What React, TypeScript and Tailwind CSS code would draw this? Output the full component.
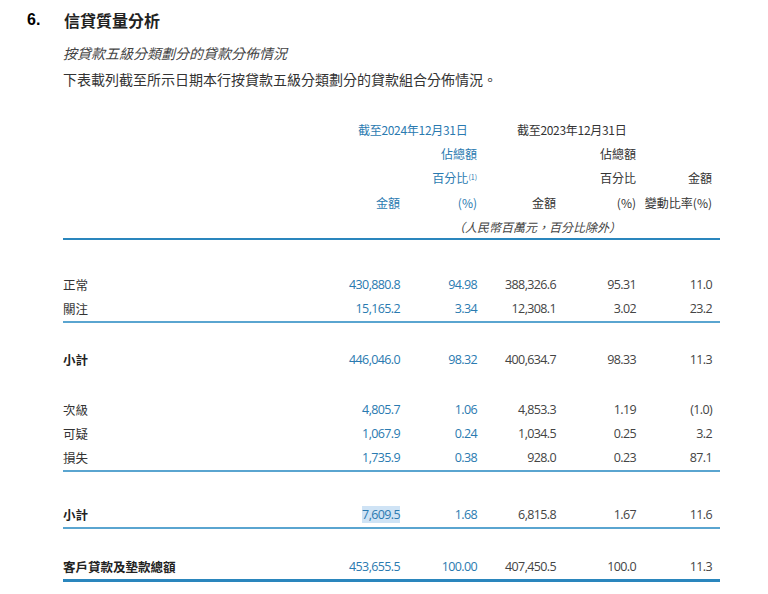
const font = { fontFamily: '"Noto Sans CJK TC", "Noto Sans", sans-serif' };

type Row = { label: string; v: string[]; bold?: boolean; line?: "thin" | "thick"; mt?: string; hl?: boolean };

const rows: Row[] = [
  { label: "正常", v: ["430,880.8", "94.98", "388,326.6", "95.31", "11.0"], mt: "mt-[33px]" },
  { label: "關注", v: ["15,165.2", "3.34", "12,308.1", "3.02", "23.2"], line: "thin" },
  { label: "小計", v: ["446,046.0", "98.32", "400,634.7", "98.33", "11.3"], bold: true, mt: "mt-[25px]" },
  { label: "次級", v: ["4,805.7", "1.06", "4,853.3", "1.19", "(1.0)"], mt: "mt-[26px]" },
  { label: "可疑", v: ["1,067.9", "0.24", "1,034.5", "0.25", "3.2"] },
  { label: "損失", v: ["1,735.9", "0.38", "928.0", "0.23", "87.1"], line: "thin" },
  { label: "小計", v: ["7,609.5", "1.68", "6,815.8", "1.67", "11.6"], bold: true, line: "thin", mt: "mt-[31px]", hl: true },
  { label: "客戶貸款及墊款總額", v: ["453,655.5", "100.00", "407,450.5", "100.0", "11.3"], bold: true, line: "thick", mt: "mt-[26px]" },
];

const cols = "grid grid-cols-[260px_77px_77px_79px_80px_76px] pr-2";

export default function App() {
  return (
    <div className="w-[768px] h-[594px] bg-white text-[#333]" style={font}>
      <div className="flex items-center pt-[8px] pl-[27px]">
        <span className="w-[37px] text-[16px] font-bold text-black" style={{ fontFamily: '"Liberation Sans", sans-serif' }}>6.</span>
        <span className="text-[16px] font-bold text-[#222]">信貸質量分析</span>
      </div>
      <div className="pl-[63px] mt-[11px] text-[14px] italic text-[#444]">按貸款五級分類劃分的貸款分佈情況</div>
      <div className="pl-[63px] mt-[5px] text-[14px] text-[#333]">下表載列截至所示日期本行按貸款五級分類劃分的貸款組合分佈情況。</div>

      <div className="ml-[63px] w-[657px] mt-[27px] text-[12px]">
        <div className={`${cols} h-[25px] items-center`}>
          <div />
          <div className="col-span-2 pl-[35px] text-[#2a7ab0] tracking-tight">截至2024年12月31日</div>
          <div className="col-span-2 pl-[40px] tracking-tight">截至2023年12月31日</div>
          <div />
        </div>
        <div className={`${cols} h-[24px] items-center text-right`}>
          <div /><div /><div className="text-[#2a7ab0]">佔總額</div><div /><div>佔總額</div><div />
        </div>
        <div className={`${cols} h-[24px] items-center text-right`}>
          <div /><div /><div className="text-[#2a7ab0]">百分比<sup className="text-[7px]">(1)</sup></div><div /><div>百分比</div><div>金額</div>
        </div>
        <div className={`${cols} h-[26px] items-center text-right`}>
          <div /><div className="text-[#2a7ab0]">金額</div><div className="text-[#2a7ab0]">(%)</div><div>金額</div><div>(%)</div><div className="whitespace-nowrap">變動比率(%)</div>
        </div>
        <div className="h-[22px] flex items-center pl-[390px] italic text-[#444]">（人民幣百萬元，百分比除外）</div>
        <div className="h-[2px] bg-[#2a86bd]" />

        {rows.map((r, i) => (
          <div key={i} className={r.mt}>
            <div className={`${cols} h-[24px] items-center text-[12.5px]`}>
              <div className={r.bold ? "font-bold text-[#222]" : "text-[#333]"}>{r.label}</div>
              {r.v.map((x, j) => (
                <div key={j} className={`text-right tracking-tighter ${j < 2 ? "text-[#2a7ab0]" : "text-[#444]"}`} style={{ fontFamily: '"Open Sans", sans-serif' }}>
                  <span className={r.hl && j === 0 ? "bg-[#cfe3f5]" : ""}>{x}</span>
                </div>
              ))}
            </div>
            {r.line === "thin" && <div className="h-[2px] bg-[#5aa5d0]" />}
            {r.line === "thick" && <div className="h-[3px] bg-[#2a86bd]" />}
          </div>
        ))}
      </div>
    </div>
  );
}
